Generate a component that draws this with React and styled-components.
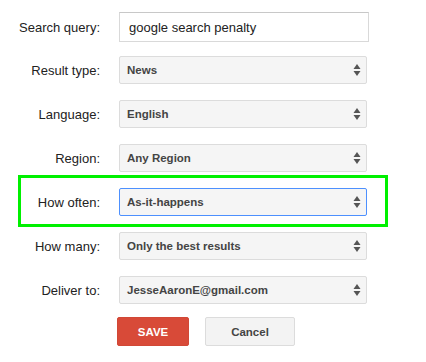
import React from "react";
import styled, { createGlobalStyle } from "styled-components";

const Global = createGlobalStyle`
  body {
    margin: 0;
    background: #fff;
    font-family: Arial, "Liberation Sans", sans-serif;
  }
`;

const Form = styled.div`
  display: flex;
  flex-direction: column;
  padding-top: 12px;
  width: 426px;
`;

const Row = styled.div`
  position: relative;
  display: flex;
  align-items: flex-start;
  height: 44px;
`;

const Highlight = styled.div`
  position: absolute;
  left: 18px;
  top: -13px;
  width: 364px;
  height: 46px;
  border: 3px solid #00f000;
  pointer-events: none;
`;

const Label = styled.label`
  width: 100px;
  height: ${(p) => p.$h}px;
  display: flex;
  align-items: center;
  justify-content: flex-end;
  font-size: 13px;
  color: #222;
  margin-right: 19px;
`;

const TextInput = styled.div`
  box-sizing: border-box;
  width: 250px;
  height: 30px;
  border: 1px solid #d9d9d9;
  border-top-color: #c8c8c8;
  padding: 0 9px;
  display: flex;
  align-items: center;
  font-size: 13px;
  color: #222;
`;

const Select = styled.div`
  box-sizing: border-box;
  width: 248px;
  height: 28px;
  border: 1px solid ${(p) => (p.$focused ? "#4d90fe" : "#dcdcdc")};
  border-radius: 2px;
  background: #f5f5f5;
  padding: 0 5px 0 7px;
  display: flex;
  align-items: center;
  justify-content: space-between;
  font-size: 11.5px;
  font-weight: bold;
  color: #444;
`;

const Buttons = styled.div`
  display: flex;
  gap: 16px;
  padding-left: 117px;
  margin-top: -3px;
`;

const Button = styled.button`
  box-sizing: border-box;
  height: 29px;
  width: ${(p) => p.$w}px;
  border-radius: 2px;
  font-family: Arial, "Liberation Sans", sans-serif;
  font-size: 11.5px;
  font-weight: bold;
  padding: 0;
  cursor: pointer;
  color: ${(p) => (p.$primary ? "#fff" : "#444")};
  background: ${(p) => (p.$primary ? "#d84a38" : "#f3f3f3")};
  border: 1px solid ${(p) => (p.$primary ? "#d14836" : "#dcdcdc")};
`;

const Arrows = () => (
  <svg width="8" height="14" viewBox="0 0 8 14">
    <path d="M4 1 L7.5 6 L0.5 6 Z" fill="#555" />
    <path d="M4 13 L7.5 8 L0.5 8 Z" fill="#555" />
  </svg>
);

const selects = [
  ["Result type:", "News"],
  ["Language:", "English"],
  ["Region:", "Any Region"],
  ["How often:", "As-it-happens", true],
  ["How many:", "Only the best results"],
  ["Deliver to:", "JesseAaronE@gmail.com"],
];

export default function App() {
  return (
    <>
      <Global />
      <Form>
        <Row>
          <Label $h={30}>Search query:</Label>
          <TextInput>google search penalty</TextInput>
        </Row>
        {selects.map(([label, value, focused]) => (
          <Row key={label}>
            {focused && <Highlight />}
            <Label $h={28}>{label}</Label>
            <Select $focused={focused}>
              {value}
              <Arrows />
            </Select>
          </Row>
        ))}
        <Buttons>
          <Button $primary $w={72}>SAVE</Button>
          <Button $w={90}>Cancel</Button>
        </Buttons>
      </Form>
    </>
  );
}
